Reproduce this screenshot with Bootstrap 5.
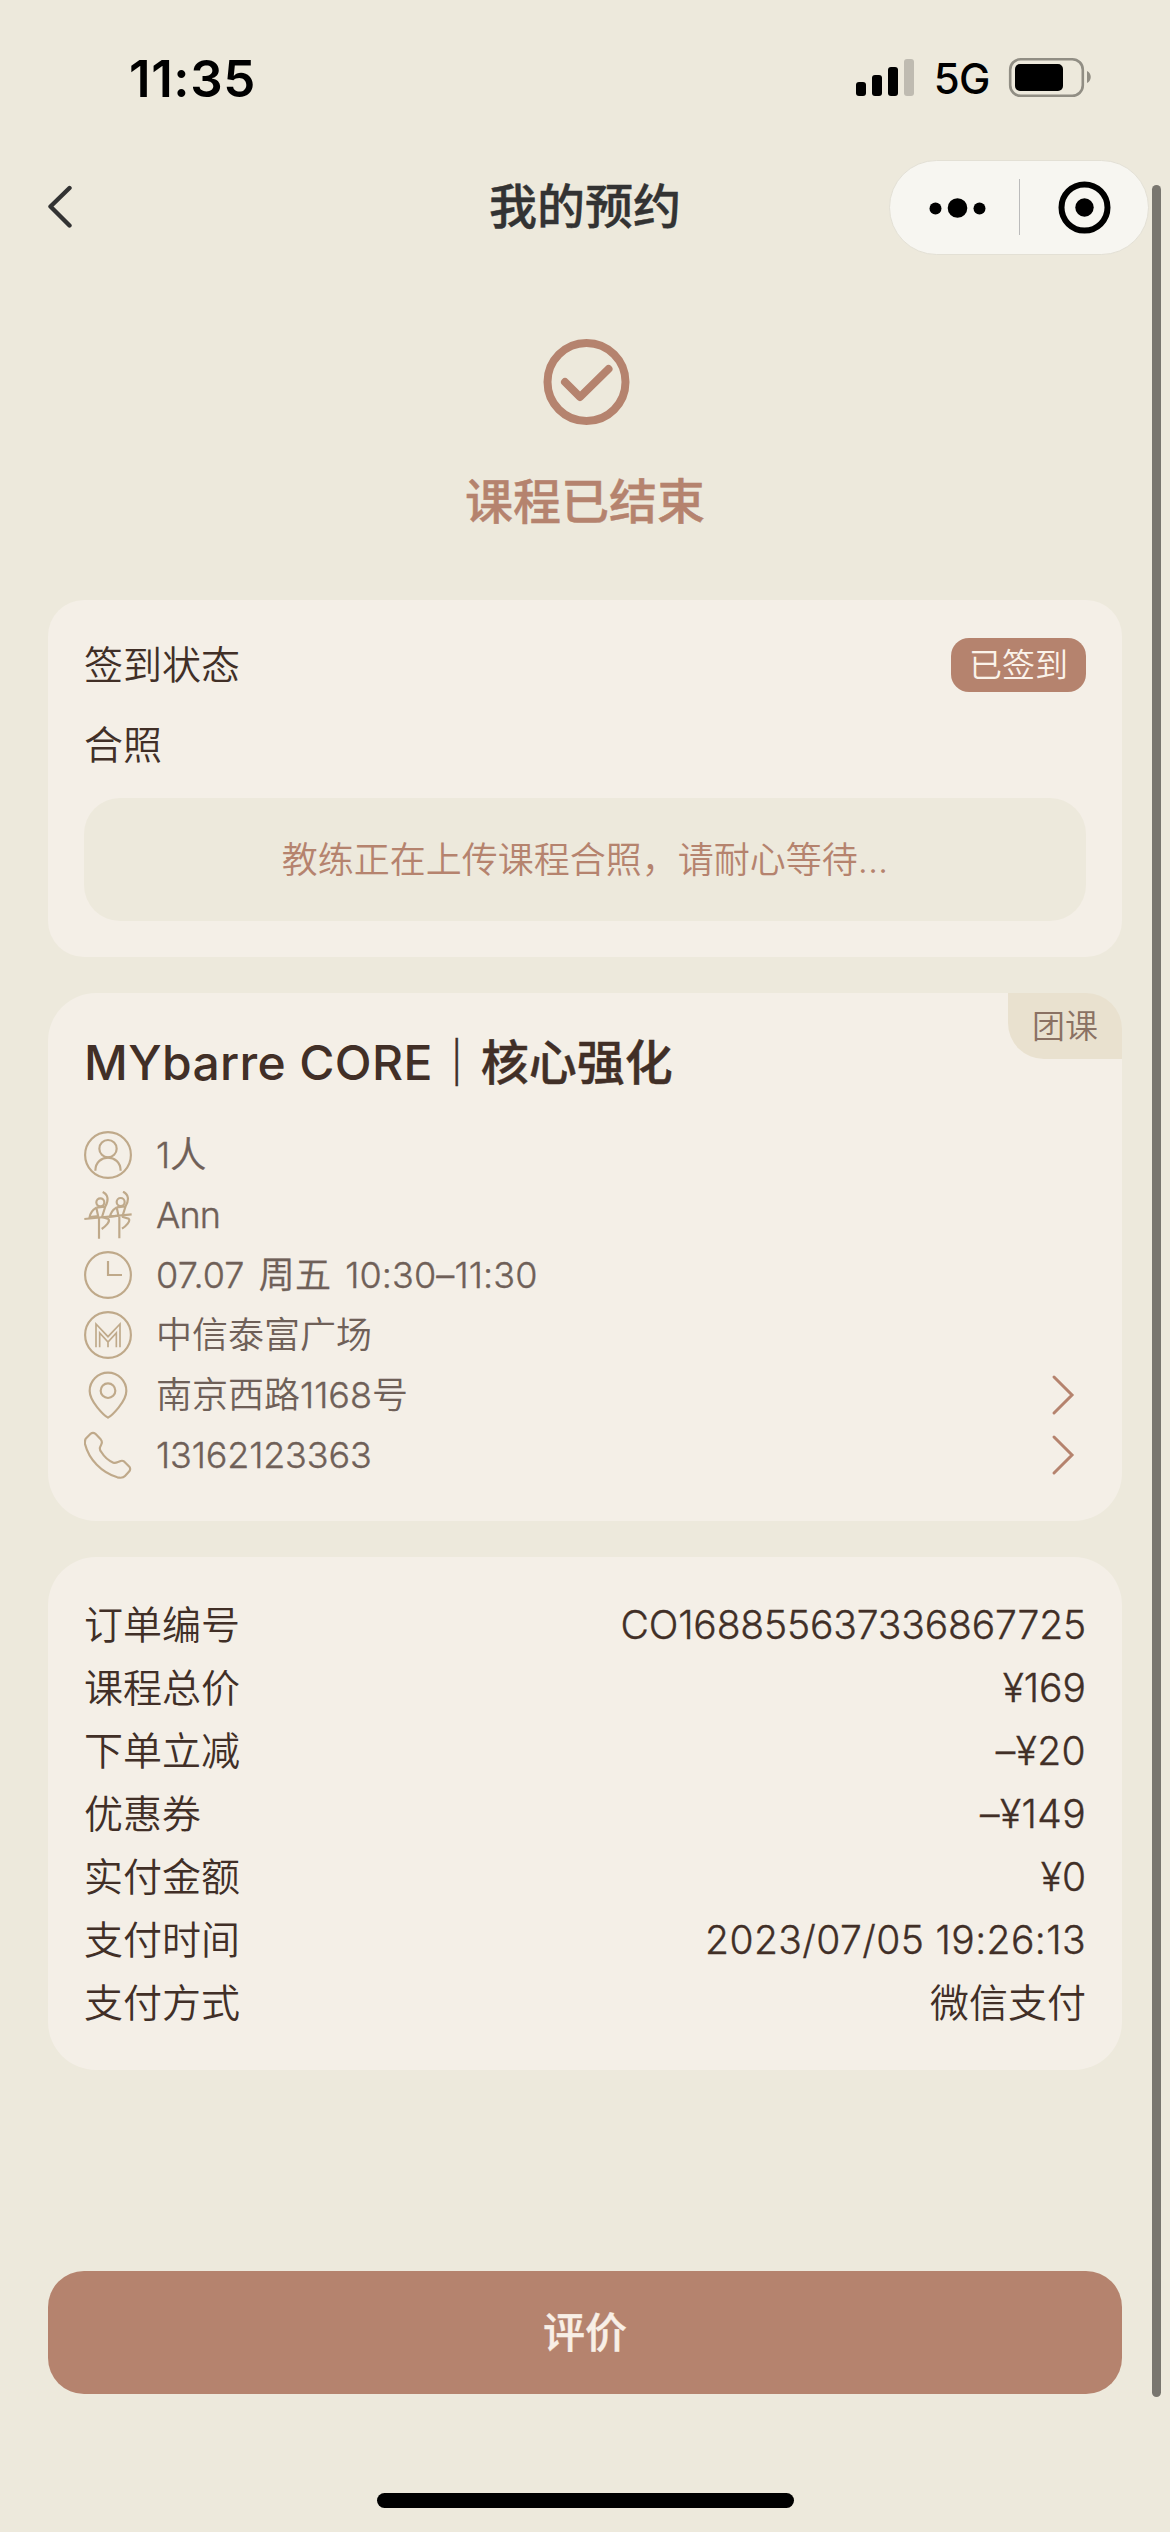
<!DOCTYPE html>
<html lang="zh-CN">
<head>
<meta charset="utf-8">
<meta name="viewport" content="width=device-width, initial-scale=1">
<title>我的预约</title>
<link href="https://cdn.jsdelivr.net/npm/bootstrap@5.3.0/dist/css/bootstrap.min.css" rel="stylesheet">
<style>
  :root { --sand:#ede9dc; --paper:#f4efe7; --clay:#b5836e; --cocoa:#412f27; --taupe:#6f6058; --gold:#bfa98a; }
  body { background:var(--sand); color:var(--cocoa); font-family:"Inter","Noto Sans CJK SC",sans-serif; font-size:39px; line-height:54px; width:1170px; }
  svg { display:block; flex:none; }
  .screen { height:2532px; overflow:hidden; }
  .status-bar { height:141px; padding:43px 78px 0 129px; line-height:72px; color:#000; }
  .clock { font-size:51px; font-weight:600; letter-spacing:.6px; }
  .carrier { font-size:42px; font-weight:450; letter-spacing:-.5px; margin:0 18px 0 19px; }
  .top-nav { height:132px; padding:0 21px 0 48px; color:#333; }
  .top-nav h1 { font-size:48px; font-weight:500; line-height:60px; margin:0; }
  .strong-cjk { -webkit-text-stroke:.4px currentColor; }
  .side { width:233px; }
  .capsule { width:260px; height:95px; background:#f7f6f1; border:1px solid #e3e0d5; border-radius:48px; }
  .capsule .vr { width:1px; height:56px; background:#bbb; opacity:1; min-height:0; align-self:center; }
  .hero { padding-top:65px; height:327px; color:var(--clay); }
  .hero p { font-size:48px; font-weight:500; line-height:60px; margin:46px 0 0; }
  .sheets { padding:0 48px; gap:36px; }
  .panel { background:var(--paper); border:0; color:inherit; border-radius:48px; padding:36px; }
  .panel-sm { border-radius:36px; height:357px; padding-top:38px; }
  .signed { font-size:33px; line-height:54px; padding:0 18px; border-radius:18px; background:var(--clay); color:#fbf3ea; }
  .photo-label { margin-top:26px; }
  .notice { height:123px; border-radius:36px; background:var(--sand); color:var(--clay); font-size:36px; margin-top:26px; }
  .lesson { height:528px; }
  .lesson h2 { font-size:48px; font-weight:500; line-height:68px; margin:0 0 28px; }
  .lesson h2 span { letter-spacing:.35px; -webkit-text-stroke:0; }
  .kind { top:0; right:0; width:114px; height:66px; line-height:66px; font-size:33px; text-align:center; color:#8a7163; background:#e9e1cf; border-radius:0 36px 0 36px; }
  .fact { height:60px; gap:24px; font-size:36px; color:var(--taupe); }
  .latin { -webkit-text-stroke:.35px currentColor; }
  .tight { letter-spacing:-.15px; }
  .spaced { word-spacing:4px; letter-spacing:.1px; }
  .loose { letter-spacing:.4px; }
  .bill { height:513px; }
  .bill > div { height:63px; line-height:63px; }
  .rate { margin:201px 48px 0; height:123px; border-radius:36px; background:var(--clay); color:#f8efe6; font-size:42px; font-weight:500; border:0; }
  .home-bar { width:417px; height:15px; border-radius:8px; background:#000; margin:99px auto 0; }
  .scroll-thumb { top:185px; right:9px; width:9px; height:2212px; border-radius:5px; background:#79766f; }
  .ln { fill:none; stroke:var(--gold); stroke-width:6.5; }
  .thin { font-weight:350; }
</style>
<script src="https://cdn.jsdelivr.net/npm/bootstrap@5.3.0/dist/js/bootstrap.bundle.min.js"></script>
</head>
<body>
<div class="screen d-flex flex-column position-relative">
  <div class="status-bar d-flex justify-content-between">
    <span class="clock">11:35</span>
    <div class="d-flex align-items-start">
      <svg width="60" height="72" viewBox="855 43 60 72"><rect x="856" y="82" width="10" height="14" rx="3"/><rect x="872" y="75" width="10" height="21" rx="3"/><rect x="888" y="67" width="10" height="29" rx="3"/><rect x="904" y="59" width="10" height="37" rx="3" fill="#bfbbb1"/></svg>
      <span class="carrier">5G</span>
      <svg width="84" height="72" viewBox="1008 43 84 72"><rect x="1010.2" y="59.2" width="72.600" height="36.600" rx="10.500" fill="none" stroke="#918e84" stroke-width="2.600"/><rect x="1015" y="64" width="48" height="27" rx="5"/><path d="M1087 71c5 2 5 10 0 12z" fill="#918e84"/></svg>
    </div>
  </div>

  <nav class="top-nav d-flex align-items-center justify-content-between">
    <div class="side"><svg width="26" height="44" viewBox="48 184 26 44" fill="none" stroke="#333" stroke-width="4.400" stroke-linecap="round" stroke-linejoin="round"><path d="M69.500 187 50.500 205.500 69.500 224.500"/></svg></div>
    <h1 class="strong-cjk">我的预约</h1>
    <div class="capsule d-flex align-items-center">
      <svg width="129" height="93" viewBox="889.500 160.500 129 93"><circle cx="935" cy="208" r="6"/><circle cx="957" cy="207.500" r="9.800"/><circle cx="979" cy="208" r="6"/></svg>
      <div class="vr"></div>
      <svg width="128" height="93" viewBox="1019.500 160.500 128 93"><circle cx="1084" cy="207" r="23" fill="none" stroke="#000" stroke-width="6"/><circle cx="1084" cy="207" r="9.200"/></svg>
    </div>
  </nav>

  <header class="hero d-flex flex-column align-items-center">
    <svg width="90" height="88" viewBox="540 338 90 88" fill="none" stroke="#b5836e" stroke-width="8"><circle cx="586.500" cy="382" r="39"/><path d="M565 382 580 397 608.500 369" stroke-linecap="round" stroke-linejoin="round"/></svg>
    <p class="strong-cjk">课程已结束</p>
  </header>

  <main class="sheets d-flex flex-column">
    <section class="card panel panel-sm thin">
      <div class="d-flex justify-content-between align-items-center">
        <span>签到状态</span><span class="badge signed thin">已签到</span>
      </div>
      <div class="photo-label">合照</div>
      <div class="notice d-flex align-items-center justify-content-center">教练正在上传课程合照，请耐心等待...</div>
    </section>

    <section class="card panel lesson thin">
      <span class="kind position-absolute">团课</span>
      <h2 class="strong-cjk"><span>MYbarre CORE</span>｜核心强化</h2>
      <div class="fact d-flex align-items-center">
        <svg width="48" height="48" viewBox="72 63 144 144" class="ln"><circle cx="144" cy="135" r="68.700"/><circle cx="144" cy="116" r="26"/><path d="M106 182c1-52 75-52 76 0"/></svg>
        <span class="latin">1人</span>
      </div>
      <div class="fact d-flex align-items-center">
        <svg width="48" height="48" viewBox="72 243 144 144" class="ln"><path d="M73 327 215 313"/><g id="dancer"><circle cx="121" cy="277" r="12"/><path d="M128 246c18 8 18 26 8 43l-10 32M109 293l24-3M109 293l6 28M109 293c-10 6-18 16-20 28l27-3M117 322v64M125 321l20 6c7 7-8 22-20 30"/></g><use href="#dancer" x="61" y="-1"/></svg>
        <span class="latin" style="letter-spacing:-.8px">Ann</span>
      </div>
      <div class="fact d-flex align-items-center">
        <svg width="48" height="48" viewBox="72 423 144 144" class="ln"><circle cx="144" cy="495" r="68.700"/><path d="M144 453v42h42"/></svg>
        <span class="latin spaced">07.07 周五 10:30–11:30</span>
      </div>
      <div class="fact d-flex align-items-center">
        <svg width="48" height="48" viewBox="72 603 144 144" class="ln"><circle cx="144" cy="675" r="68.700"/><path d="M108 712v-70l36 38 36-38v70M119 712v-43l25 27 25-27v43M144 695v17" stroke-width="5"/></svg>
        <span>中信泰富广场</span>
      </div>
      <div class="fact d-flex align-items-center">
        <svg width="48" height="48" viewBox="72 783 144 144" class="ln"><path d="M144 923c-11-6-55-48-55-80a55 55 0 0 1 110 0c0 32-44 74-55 80z"/><circle cx="144" cy="842" r="22"/></svg>
        <span>南京西路<span class="latin">1168</span>号</span>
        <svg class="ms-auto me-2" width="27" height="44" viewBox="1050 1373 27 44" fill="none" stroke="#b5836e" stroke-width="3" stroke-linecap="round"><path d="M1053 1377 1071 1395 1053 1413"/></svg>
      </div>
      <div class="fact d-flex align-items-center">
        <svg width="48" height="48" viewBox="72 963 144 144" class="ln" stroke-linejoin="round"><path d="M77 986 91 972Q99 965 107 972L122 988Q128 995 124 1003L120 1012Q118 1019 124 1026C133 1041 144 1051 160 1058Q166 1060 172 1057L182 1053Q188 1051 193 1055L208 1070Q213 1077 208 1084L195 1098Q188 1106 172 1102C125 1088 87 1049 75 1002Q74 992 77 986z"/></svg>
        <span class="latin tight">13162123363</span>
        <svg class="ms-auto me-2" width="27" height="44" viewBox="1050 1373 27 44" fill="none" stroke="#b5836e" stroke-width="3" stroke-linecap="round"><path d="M1053 1377 1071 1395 1053 1413"/></svg>
      </div>
    </section>

    <section class="card panel bill thin">
      <div class="d-flex justify-content-between"><span>订单编号</span><span class="latin tight">CO168855637336867725</span></div>
      <div class="d-flex justify-content-between"><span>课程总价</span><span class="latin">¥169</span></div>
      <div class="d-flex justify-content-between"><span>下单立减</span><span class="latin loose">–¥20</span></div>
      <div class="d-flex justify-content-between"><span>优惠券</span><span class="latin loose">–¥149</span></div>
      <div class="d-flex justify-content-between"><span>实付金额</span><span class="latin">¥0</span></div>
      <div class="d-flex justify-content-between"><span>支付时间</span><span class="latin loose">2023/07/05 19:26:13</span></div>
      <div class="d-flex justify-content-between"><span>支付方式</span><span>微信支付</span></div>
    </section>
  </main>

  <button type="button" class="btn rate strong-cjk">评价</button>
  <div class="home-bar"></div>
  <div class="scroll-thumb position-absolute"></div>
</div>
</body>
</html>
